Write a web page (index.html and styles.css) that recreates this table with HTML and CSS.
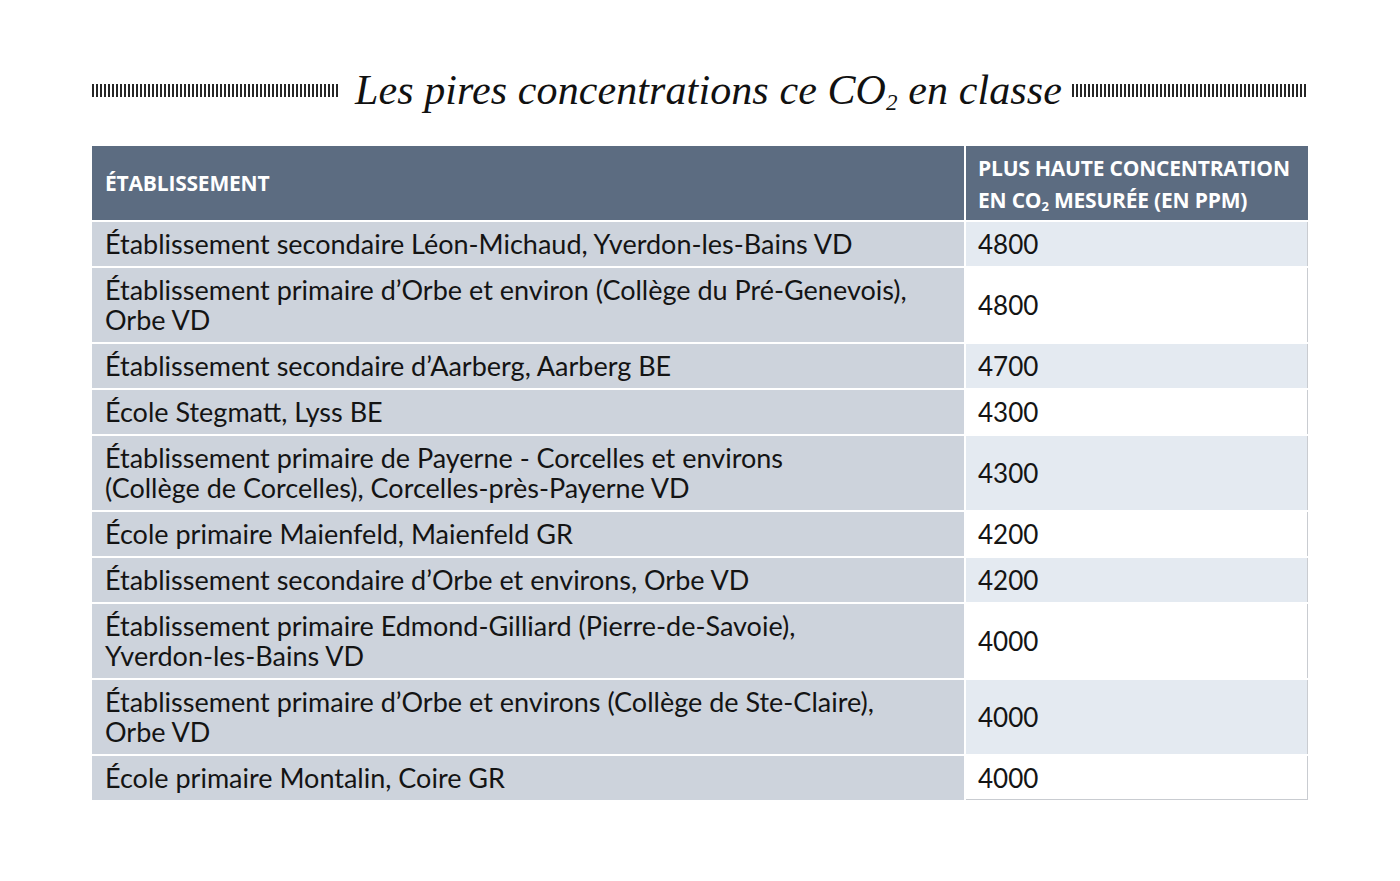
FILE: index.html
```html
<!DOCTYPE html>
<html lang="fr">
<head>
<meta charset="utf-8">
<title>Les pires concentrations ce CO2 en classe</title>
<link rel="stylesheet" href="styles.css">
</head>
<body>
<div class="page">
  <div class="title-row">
    <div class="rule rule-left"></div>
    <h1 class="title">Les pires concentrations ce CO<sub>2</sub> en classe</h1>
    <div class="rule rule-right"></div>
  </div>
  <div class="table">
    <div class="th th-left"><span>ÉTABLISSEMENT</span></div>
    <div class="th th-right"><span>PLUS HAUTE CONCENTRATION<br>EN CO<sub>2</sub> MESURÉE (EN PPM)</span></div>

    <div class="td name">Établissement secondaire Léon-Michaud, Yverdon-les-Bains VD</div>
    <div class="td val alt">4800</div>

    <div class="td name tall">Établissement primaire d’Orbe et environ (Collège du Pré-Genevois),<br>Orbe VD</div>
    <div class="td val">4800</div>

    <div class="td name">Établissement secondaire d’Aarberg, Aarberg BE</div>
    <div class="td val alt">4700</div>

    <div class="td name">École Stegmatt, Lyss BE</div>
    <div class="td val">4300</div>

    <div class="td name tall">Établissement primaire de Payerne - Corcelles et environs<br>(Collège de Corcelles), Corcelles-près-Payerne VD</div>
    <div class="td val alt">4300</div>

    <div class="td name">École primaire Maienfeld, Maienfeld GR</div>
    <div class="td val">4200</div>

    <div class="td name">Établissement secondaire d’Orbe et environs, Orbe VD</div>
    <div class="td val alt">4200</div>

    <div class="td name tall">Établissement primaire Edmond-Gilliard (Pierre-de-Savoie),<br>Yverdon-les-Bains VD</div>
    <div class="td val">4000</div>

    <div class="td name tall">Établissement primaire d’Orbe et environs (Collège de Ste-Claire),<br>Orbe VD</div>
    <div class="td val alt">4000</div>

    <div class="td name">École primaire Montalin, Coire GR</div>
    <div class="td val last">4000</div>
  </div>
</div>
</body>
</html>
```
FILE: styles.css
```css
html, body {
  margin: 0;
  padding: 0;
  background: #ffffff;
}

.page {
  width: 1216px;
  margin: 0 auto;
  padding-top: 66px;
}

.title-row {
  display: flex;
  align-items: center;
  height: 48px;
}

.rule {
  height: 13px;
  background: repeating-linear-gradient(to right, #262626 0, #262626 2px, transparent 2px, transparent 4px);
}

.rule-left {
  width: 248px;
  flex: none;
}

.rule-right {
  flex: 1;
}

.title {
  margin: 0 10px 0 15px;
  font-family: "Liberation Serif", "Times New Roman", serif;
  font-style: italic;
  font-weight: normal;
  font-size: 42px;
  letter-spacing: 0.1px;
  line-height: 48px;
  color: #111111;
  white-space: nowrap;
}

.title sub {
  font-size: 23px;
  vertical-align: -6px;
  line-height: 0;
}

.table {
  margin-top: 32px;
  display: grid;
  grid-template-columns: 872px 1fr;
  column-gap: 2px;
  row-gap: 2px;
  background: #ffffff;
}

.th {
  background: #5c6c81;
  color: #ffffff;
  font-family: "Open Sans", "Liberation Sans", sans-serif;
  font-weight: 700;
  font-size: 21px;
  letter-spacing: -0.2px;
  height: 74px;
  display: flex;
  align-items: center;
  box-sizing: border-box;
}

.th-left {
  padding-left: 13px;
}

.th-right {
  padding-left: 12px;
  line-height: 32px;
  padding-top: 2px;
}

.th sub {
  font-size: 13px;
  vertical-align: -3px;
  line-height: 0;
}

.td {
  display: flex;
  align-items: center;
  box-sizing: border-box;
  color: #141414;
}

.name {
  min-height: 44px;
  background: #cdd3dc;
  padding-left: 13px;
  font-family: "Lato", "Liberation Sans", sans-serif;
  line-height: 30px;
  font-size: 27px;
}

.name.tall {
  min-height: 74px;
}

.val {
  background: #ffffff;
  padding-left: 12px;
  font-family: "Lato", "Liberation Sans", sans-serif;
  font-size: 26px;
  border-right: 1px solid #c9ccd1;
}

.val.alt {
  background: #e4eaf1;
}

.val.last {
  border-bottom: 1px solid #c9ccd1;
}
```
